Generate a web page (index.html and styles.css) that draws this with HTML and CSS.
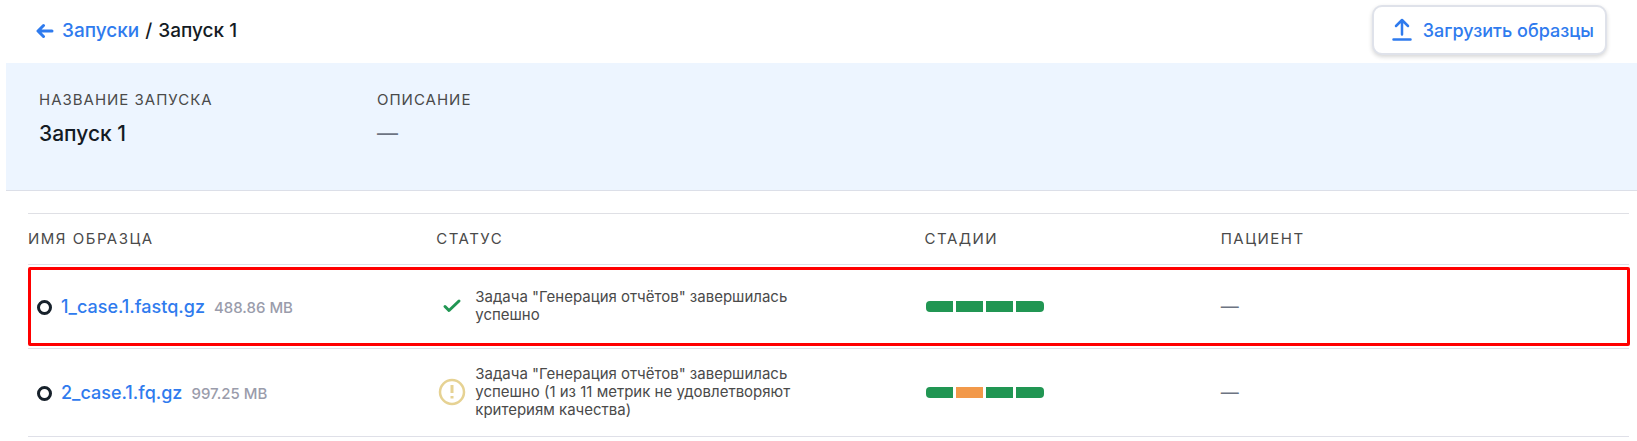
FILE: index.html
```html
<!DOCTYPE html>
<html lang="ru">
<head>
<meta charset="utf-8">
<meta name="viewport" content="width=device-width, initial-scale=1">
<title>Запуск 1</title>
<link rel="stylesheet" href="styles.css">
</head>
<body>
<header class="topbar">
  <nav class="crumbs">
    <a class="link crumb-back" href="#runs">
      <svg class="icon-back" viewBox="0 0 18 16" aria-hidden="true"><path d="M16 8H2.500M7.500 2.500L2 8l5.500 5.500"/></svg>
      Запуски</a>
    <span>/</span>
    <span>Запуск 1</span>
  </nav>
  <button class="upload" type="button">
    <svg class="icon-upload" viewBox="0 0 20 24" aria-hidden="true"><path d="M10 16.500V3M4 8l6-6 6 6M1.500 21.500h17"/></svg>
    Загрузить образцы
  </button>
</header>

<section class="info">
  <dl class="info-item">
    <dt class="caption">НАЗВАНИЕ ЗАПУСКА</dt>
    <dd class="info-value">Запуск 1</dd>
  </dl>
  <dl class="info-item">
    <dt class="caption">ОПИСАНИЕ</dt>
    <dd class="info-value info-empty">—</dd>
  </dl>
</section>

<main class="content">
  <table class="samples">
    <colgroup><col class="col-name"><col class="col-status"><col class="col-stages"><col class="col-patient"></colgroup>
    <thead>
      <tr><th scope="col">ИМЯ ОБРАЗЦА</th><th scope="col">СТАТУС</th><th scope="col">СТАДИИ</th><th scope="col">ПАЦИЕНТ</th></tr>
    </thead>
    <tbody>
      <tr class="row highlighted">
        <td>
          <div class="name">
            <input class="pick" type="radio" name="sample" aria-label="1_case.1.fastq.gz">
            <a class="link" href="#sample-1">1_case.1.fastq.gz</a>
            <span class="size">488.86 MB</span>
          </div>
        </td>
        <td>
          <div class="status">
            <svg class="icon-status ok" viewBox="0 0 28 28" aria-hidden="true"><path d="M7 14.500l4 4L21 9"/></svg>
            <span class="status-text">Задача "Генерация отчётов" завершилась успешно</span>
          </div>
        </td>
        <td>
          <div class="stages"><i class="stage"></i><i class="stage"></i><i class="stage"></i><i class="stage"></i></div>
        </td>
        <td class="patient">—</td>
      </tr>
      <tr class="row">
        <td>
          <div class="name">
            <input class="pick" type="radio" name="sample" aria-label="2_case.1.fq.gz">
            <a class="link" href="#sample-2">2_case.1.fq.gz</a>
            <span class="size">997.25 MB</span>
          </div>
        </td>
        <td>
          <div class="status">
            <svg class="icon-status warn" viewBox="0 0 28 28" aria-hidden="true"><circle cx="14" cy="14" r="12"/><path class="mark" d="M14 7v8M14 18v2.500"/></svg>
            <span class="status-text">Задача "Генерация отчётов" завершилась успешно (1 из 11 метрик не удовлетворяют критериям качества)</span>
          </div>
        </td>
        <td>
          <div class="stages"><i class="stage"></i><i class="stage stage-warn"></i><i class="stage"></i><i class="stage"></i></div>
        </td>
        <td class="patient">—</td>
      </tr>
    </tbody>
  </table>
</main>
</body>
</html>
```

FILE: styles.css
```css
* {
  box-sizing: border-box;
}

body {
  margin: 0;
  background: #fff;
  color: #141b24;
  font-family: Inter, "Noto Sans", sans-serif;
  font-size: 18px;
  font-weight: 500;
}

.link {
  color: #2f7bee;
  text-decoration: none;
}

.topbar {
  display: flex;
  align-items: flex-start;
  justify-content: space-between;
  height: 63px;
  padding: 5px 30px 0 36px;
}

.crumbs {
  display: flex;
  gap: 6px;
  font-size: 19px;
  line-height: 51px;
}

.crumb-back {
  display: flex;
  align-items: center;
  gap: 8px;
}

svg {
  flex: none;
  fill: none;
  stroke: currentColor;
  stroke-width: 3;
  stroke-linecap: round;
  stroke-linejoin: round;
}

.icon-back {
  width: 18px;
  height: 16px;
}

.upload {
  display: flex;
  align-items: center;
  gap: 11px;
  height: 50px;
  padding: 0 11px 0 18px;
  border: 2px solid #dfe2ea;
  border-radius: 10px;
  background: #fff;
  box-shadow: 0 2px 4px rgba(0, 0, 0, 0.16);
  color: #2f7bee;
  font: inherit;
}

.icon-upload {
  width: 20px;
  height: 24px;
  stroke-width: 2.5;
}

.info {
  display: flex;
  height: 128px;
  margin-left: 6px;
  padding: 27px 33px 0;
  border-bottom: 1px solid #dcdfe8;
  background: #edf5ff;
}

.info-item {
  width: 338px;
  margin: 0;
}

.caption {
  color: #4a4a4a;
  font-size: 15px;
  font-weight: 400;
  line-height: 20px;
  letter-spacing: 1px;
}

.info-value {
  margin: 9px 0 0;
  font-size: 21px;
  font-weight: 500;
  line-height: 30px;
}

.info-empty,
.patient {
  color: #6d7482;
  font-weight: 400;
}

.content {
  padding: 22px 8px 0 28px;
}

.samples {
  width: 100%;
  border-collapse: separate;
  border-spacing: 0;
  border-top: 1px solid #dfe0e5;
  table-layout: fixed;
}

.col-name,
.col-patient {
  width: 25.5%;
}

.col-status {
  width: 30.5%;
}

.col-stages {
  width: 18.5%;
}

th,
td {
  padding: 0;
  border-bottom: 1px solid #dfe0e8;
  text-align: left;
  vertical-align: middle;
}

th {
  height: 51px;
  padding-bottom: 2px;
  color: #4a4a4a;
  font-size: 15px;
  font-weight: 400;
  letter-spacing: 1.5px;
}

td {
  height: 84px;
  padding: 16px 0 17px;
}

.row {
  position: relative;
}

.highlighted td:first-child::after {
  content: "";
  position: absolute;
  inset: 2px -1px 3px 0;
  border: 3px solid #f00;
  border-radius: 2px;
  pointer-events: none;
}

.name {
  display: flex;
  align-items: baseline;
  padding-left: 9px;
}

.pick {
  appearance: none;
  align-self: center;
  flex: none;
  width: 15px;
  height: 15px;
  margin: 3px 9px 0 0;
  border: 3px solid #17212b;
  border-radius: 50%;
}

.size {
  margin-left: 9px;
  color: #9a9cab;
  font-size: 15px;
}

.status {
  display: flex;
  align-items: center;
  gap: 9px;
  padding-left: 2px;
}

.icon-status {
  width: 28px;
  height: 28px;
}

.ok {
  color: #219653;
}

.warn {
  color: #e6d293;
  stroke-width: 2.5;
}

.mark {
  stroke-width: 3;
  stroke-linecap: butt;
}

.status-text {
  max-width: 336px;
  color: #4a4a4a;
  font-size: 15px;
  font-weight: 400;
  line-height: 18px;
}

.stages {
  display: grid;
  grid-template-columns: repeat(4, 1fr);
  gap: 3px;
  width: 118px;
  height: 11px;
  margin-left: 1px;
  overflow: hidden;
  border-radius: 4px;
}

.stage {
  background: #219653;
}

.stage-warn {
  background: #f2994a;
}
```
